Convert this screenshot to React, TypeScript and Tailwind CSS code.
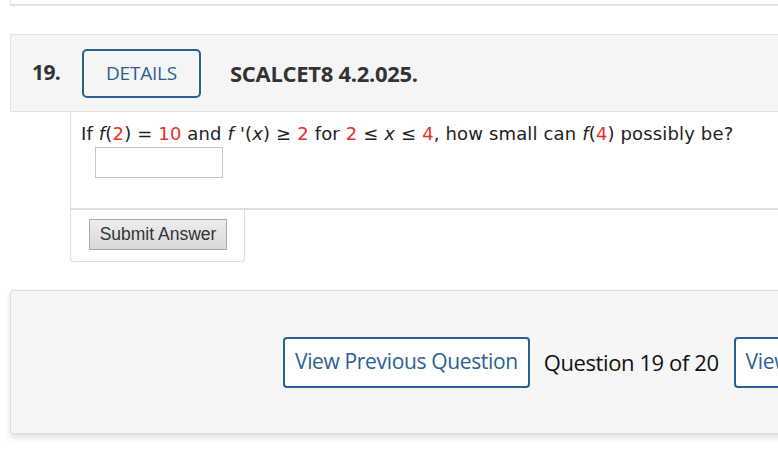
import React from "react";

const R = ({ children }: { children: React.ReactNode }) => (
  <span className="text-[#e8312a]">{children}</span>
);
const I = ({ children }: { children: React.ReactNode }) => (
  <span className="italic">{children}</span>
);

export default function App() {
  return (
    <div className="w-[778px] h-[450px] overflow-hidden bg-white">
      <div className="w-[1100px] pl-[10px]">
        {/* top remnant box */}
        <div className="h-[6px] border-l border-b-2 border-[#e4e4e4]" />

        {/* header */}
        <div className="mt-[28px] h-[78px] border border-[#e2e2e2] bg-[#f5f5f5] flex items-center pl-[21px] font-['Open_Sans',sans-serif]">
          <span className="w-[29px] text-[21px] font-bold text-[#333] tracking-[-0.6px] whitespace-nowrap">19.</span>
          <div className="ml-[21px] w-[119px] h-[49px] rounded-[5px] border-2 border-[#2b5f92] flex items-center justify-center text-[19px] font-medium text-[#2b5f92] tracking-[-0.2px]">
            DETAILS
          </div>
          <span className="ml-[29px] text-[22px] font-bold text-[#333] tracking-[-0.3px] whitespace-nowrap">SCALCET8 4.2.025.</span>
        </div>

        {/* question */}
        <div className="ml-[60px]">
          <div className="border-l border-b-2 border-[#dedede] pl-[10px] pt-[10px] h-[98px] font-['DejaVu_Sans',sans-serif] text-[18px] text-[#222]">
            <div className="leading-[24px] tracking-[0.15px] whitespace-nowrap">
              If <I>f</I>(<R>2</R>) = <R>10</R> and <I>f</I> '(<I>x</I>) ≥ <R>2</R> for <R>2</R> ≤ <I>x</I> ≤ <R>4</R>, how small can <I>f</I>(<R>4</R>) possibly be?
            </div>
            <div className="mt-[1px] ml-[14px] w-[128px] h-[31px] border border-[#c4c4c4] bg-white" />
          </div>
          <div className="w-[175px] h-[52px] border-l border-r border-b border-[#dedede] rounded-b-[4px] pl-[18px] pt-[9px]">
            <div className="w-[138px] h-[31px] border border-[#aaaaaa] bg-gradient-to-b from-[#ededed] to-[#d8d8d8] flex items-center justify-center font-['Liberation_Sans',sans-serif] text-[17.5px] text-[#333] whitespace-nowrap">
              Submit Answer
            </div>
          </div>
        </div>

        {/* nav */}
        <div className="mt-[28px] w-[1000px] h-[144px] border border-[#dcdcdc] rounded-[3px] bg-[#f6f6f6] shadow-[0_4px_6px_rgba(0,0,0,0.12)] flex items-center pl-[272px] font-['Open_Sans',sans-serif]">
          <div className="h-[51px] px-[10px] rounded-[4px] border-2 border-[#2b6094] bg-white flex items-center text-[21px] text-[#2b6094] tracking-[-0.35px] whitespace-nowrap">
            View Previous Question
          </div>
          <span className="ml-[14px] text-[22px] text-[#111] tracking-[-0.4px] whitespace-nowrap">Question 19 of 20</span>
          <div className="ml-[15px] h-[51px] px-[10px] rounded-[4px] border-2 border-[#2b6094] bg-white flex items-center text-[21px] text-[#2b6094] tracking-[-0.35px] whitespace-nowrap">
            View Next Question
          </div>
        </div>
      </div>
    </div>
  );
}
